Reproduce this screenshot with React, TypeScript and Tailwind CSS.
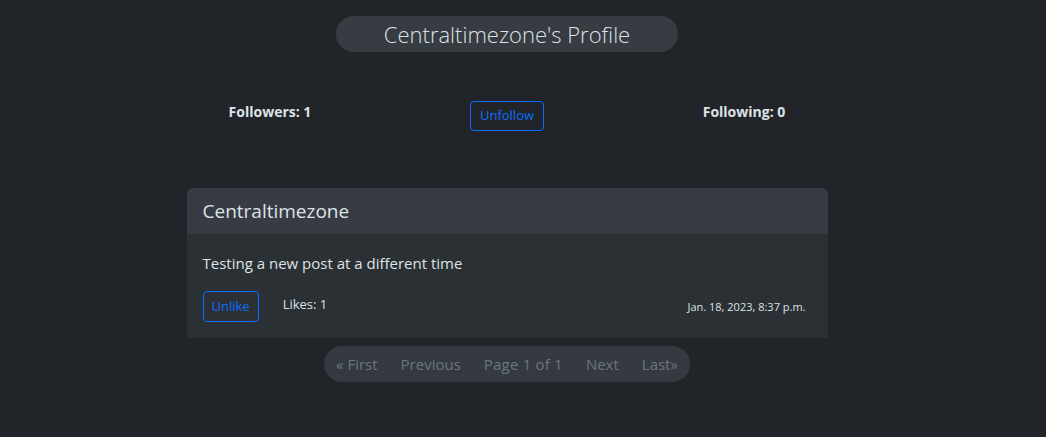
import React from "react";

export default function App() {
  const font = { fontFamily: '"Open Sans", "Noto Sans", sans-serif' };
  return (
    <div className="min-h-[437px] w-full bg-[#212529] text-[#dee2e6]" style={font}>
      <div className="flex flex-col items-center pr-[32px] pt-[16px]">
        <h1 className="flex h-[36px] w-[342px] items-center justify-center rounded-full bg-[#373b42] text-[22px] font-light text-[#dee2e6]">
          Centraltimezone's Profile
        </h1>
        <div className="mt-[49px] grid w-[711px] grid-cols-3">
          <div className="flex justify-center text-[14px] font-bold">Followers: 1</div>
          <div className="flex justify-center">
            <button className="h-[30px] rounded-[4px] border border-[#0d6efd] px-[9px] text-[13px] text-[#0d6efd]">
              Unfollow
            </button>
          </div>
          <div className="flex justify-center text-[14px] font-bold">Following: 0</div>
        </div>
        <div className="mt-[57px] w-[641px] overflow-hidden rounded-t-[6px] bg-[#2b3035]">
          <div className="flex h-[46px] items-center bg-[#373b43] px-[16px] text-[19px]">Centraltimezone</div>
          <div className="px-[16px] pb-[16px] pt-[17px]">
            <p className="text-[15px] leading-[24px]">Testing a new post at a different time</p>
            <div className="mt-[16px] flex items-start">
              <button className="h-[31px] rounded-[4px] border border-[#0d6efd] px-[8px] text-[13px] text-[#0d6efd]">
                Unlike
              </button>
              <span className="ml-[24px] mt-[4px] text-[13px]">Likes: 1</span>
              <span className="ml-auto mr-[6px] mt-[8px] text-[11px]">Jan. 18, 2023, 8:37 p.m.</span>
            </div>
          </div>
        </div>
        <div className="mt-[8px] flex h-[36px] items-center gap-[23px] rounded-full bg-[#343a40] px-[12px] text-[15px] text-[#6c757d]">
          <span>« First</span>
          <span>Previous</span>
          <span className="tracking-[0.2px]">Page 1 of 1</span>
          <span>Next</span>
          <span>Last»</span>
        </div>
      </div>
    </div>
  );
}
